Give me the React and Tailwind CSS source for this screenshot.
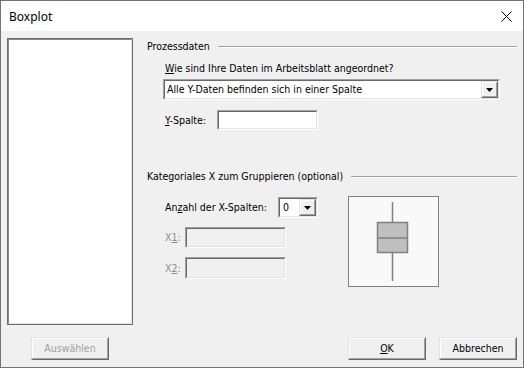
import React from "react";

const FONT = { fontFamily: '"DejaVu Sans Condensed", "DejaVu Sans", Verdana, sans-serif' };

function Sunken({ className = "", inner = "bg-white", children }) {
  return (
    <div className={`border border-t-[#a0a0a0] border-l-[#a0a0a0] border-b-white border-r-white ${className}`}>
      <div className={`h-full w-full border border-t-[#696969] border-l-[#696969] border-b-[#e3e3e3] border-r-[#e3e3e3] ${inner}`}>
        {children}
      </div>
    </div>
  );
}

function Raised({ className = "", children }) {
  return (
    <div className={`border border-t-[#e3e3e3] border-l-[#e3e3e3] border-b-[#696969] border-r-[#696969] ${className}`}>
      <div className="h-full w-full border border-t-white border-l-white border-b-[#a0a0a0] border-r-[#a0a0a0] bg-[#f0f0f0] flex items-center justify-center">
        {children}
      </div>
    </div>
  );
}

function Arrow() {
  return (
    <svg width="7" height="4" viewBox="0 0 7 4">
      <polygon points="0,0 7,0 3.5,4" fill="#000" />
    </svg>
  );
}

function GroupHeader({ title }) {
  return (
    <div className="flex items-center h-[13px] gap-[8px]">
      <span className="whitespace-nowrap">{title}</span>
      <div className="flex-1 border-t border-t-[#a0a0a0] border-b border-b-white" />
    </div>
  );
}

export default function App() {
  return (
    <div className="w-[524px] h-[368px] border border-[#747474] flex flex-col bg-[#f0f0f0] text-[10.5px] text-black leading-[13px]" style={FONT}>
      {/* Title bar */}
      <div className="h-[30px] bg-white flex items-center justify-between pl-[8px] pr-[11px]">
        <span className="text-[12px]" style={{ fontFamily: '"Noto Sans", sans-serif' }}>Boxplot</span>
        <svg width="11" height="11" viewBox="0 0 11 11">
          <path d="M0.5 0.5 L10.5 10.5 M10.5 0.5 L0.5 10.5" stroke="#000" strokeWidth="1" />
        </svg>
      </div>

      <div className="flex-1 flex flex-col">
        <div className="flex pt-[7px]">
          {/* Variable list */}
          <div className="ml-[6px] w-[126px] h-[287px] border border-[#6d6d6d]">
            <div className="h-full w-full border border-t-[#8a8a8a] border-l-[#8a8a8a] border-b-[#e3e3e3] border-r-[#e3e3e3] bg-white" />
          </div>

          {/* Right side */}
          <div className="ml-[14px] w-[370px] flex flex-col">
            <div className="mt-[2px]">
              <GroupHeader title="Prozessdaten" />
            </div>
            <div className="mt-[9px] ml-[18px] h-[13px]">
              <span className="underline">W</span>ie sind Ihre Daten im Arbeitsblatt angeordnet?
            </div>
            <Sunken className="mt-[4px] ml-[16px] w-[337px] h-[21px]">
              <div className="flex h-full items-center">
                <span className="flex-1 pl-[2px] whitespace-nowrap">Alle Y-Daten befinden sich in einer Spalte</span>
                <Raised className="w-[17px] h-full">
                  <Arrow />
                </Raised>
              </div>
            </Sunken>
            <div className="mt-[10px] ml-[18px] flex items-center">
              <span className="w-[52px]">
                <span className="underline">Y</span>-Spalte:
              </span>
              <Sunken className="w-[101px] h-[20px]" />
            </div>

            <div className="mt-[40px]">
              <GroupHeader title="Kategoriales X zum Gruppieren (optional)" />
            </div>

            <div className="mt-[13px] flex">
              <div className="w-[201px] pl-[18px] flex flex-col">
                <div className="mt-[1px] flex items-center">
                  <span className="w-[113px]">
                    An<span className="underline">z</span>ahl der X-Spalten:
                  </span>
                  <Sunken className="w-[40px] h-[21px]">
                    <div className="flex h-full items-center">
                      <span className="flex-1 pl-[3px]">0</span>
                      <Raised className="w-[17px] h-full">
                        <Arrow />
                      </Raised>
                    </div>
                  </Sunken>
                </div>
                <div className="mt-[9px] flex items-center text-[#8d8d8d]">
                  <span className="w-[20px]">
                    X<span className="underline">1</span>:
                  </span>
                  <Sunken className="w-[101px] h-[21px]" inner="bg-[#f0f0f0]" />
                </div>
                <div className="mt-[9px] flex items-center text-[#8d8d8d]">
                  <span className="w-[20px]">
                    X<span className="underline">2</span>:
                  </span>
                  <Sunken className="w-[101px] h-[22px]" inner="bg-[#f0f0f0]" />
                </div>
              </div>

              {/* Preview */}
              <div className="w-[91px] h-[91px] border border-[#808080] bg-[#f9f9f9]">
                <svg width="89" height="89" viewBox="0 0 89 89">
                  <g stroke="#808080" strokeWidth="1.5" fill="none">
                    <line x1="43.5" y1="5" x2="43.5" y2="25" />
                    <line x1="43.5" y1="55" x2="43.5" y2="84" />
                    <rect x="28.5" y="25.5" width="30" height="30" fill="#c0c0c0" />
                    <line x1="28.5" y1="41" x2="58.5" y2="41" />
                  </g>
                </svg>
              </div>
            </div>
          </div>
        </div>

        {/* Buttons */}
        <div className="mt-[12px] flex items-center pr-[6px]">
          <Raised className="ml-[30px] w-[78px] h-[23px]">
            <span className="text-[#a0a0a0]">Auswählen</span>
          </Raised>
          <div className="flex-1" />
          <Raised className="w-[78px] h-[23px]">
            <span>
              <span className="underline">O</span>K
            </span>
          </Raised>
          <Raised className="ml-[13px] w-[78px] h-[23px]">
            <span>Abbrechen</span>
          </Raised>
        </div>
      </div>
    </div>
  );
}
